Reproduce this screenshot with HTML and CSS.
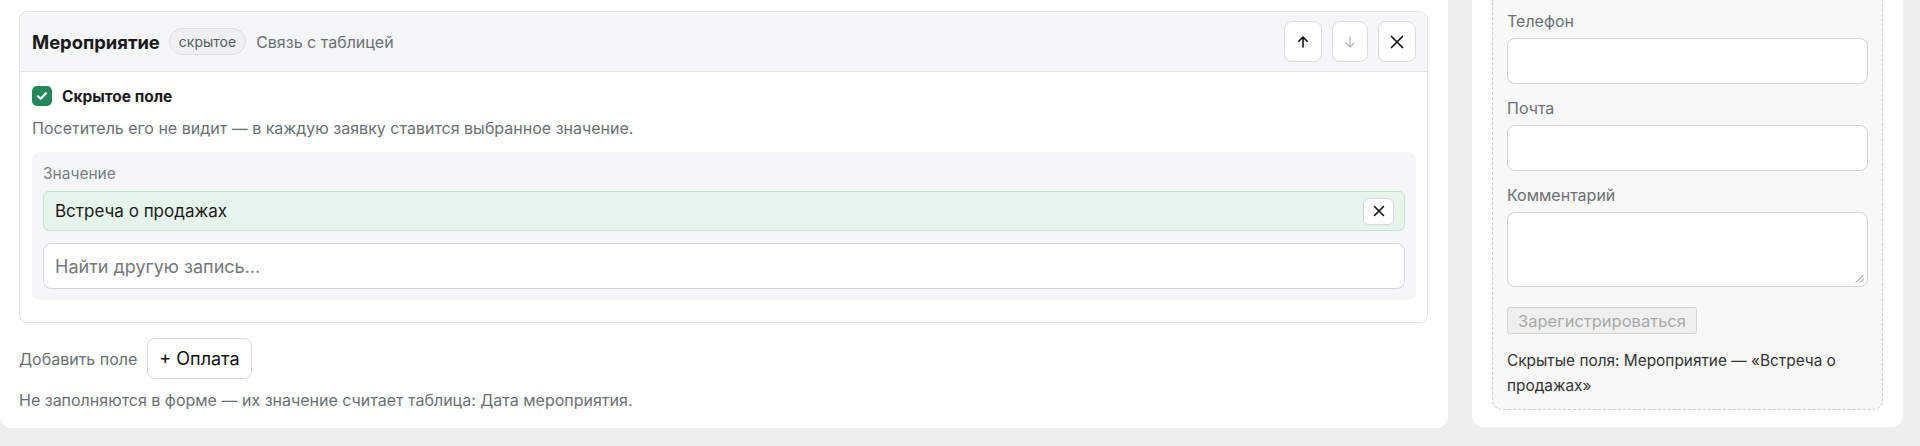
FILE: index.html
```html
<!DOCTYPE html>
<html lang="ru">
<head>
<meta charset="utf-8">
<title>Форма</title>
<link rel="stylesheet" href="styles.css">
</head>
<body>
<div class="layout">
  <main class="editor">
    <section class="field-card">
      <header class="field-head">
        <span class="field-title">Мероприятие</span>
        <span class="badge">скрытое</span>
        <span class="field-kind">Связь с таблицей</span>
        <div class="head-actions">
          <button class="icon-btn" type="button" aria-label="Вверх">
            <svg width="16" height="16" viewBox="0 0 16 16" fill="none" stroke="currentColor" stroke-width="1.6" stroke-linecap="round" stroke-linejoin="round"><path d="M8 13V3M3.8 7.2L8 3l4.2 4.2"/></svg>
          </button>
          <button class="icon-btn disabled" type="button" aria-label="Вниз">
            <svg width="16" height="16" viewBox="0 0 16 16" fill="none" stroke="currentColor" stroke-width="1.3" stroke-linecap="round" stroke-linejoin="round"><path d="M8 3v10M4 9l4 4 4-4"/></svg>
          </button>
          <button class="icon-btn" type="button" aria-label="Удалить">
            <svg width="16" height="16" viewBox="0 0 16 16" fill="none" stroke="currentColor" stroke-width="1.7" stroke-linecap="round"><path d="M2.5 2.5l11 11M13.5 2.5l-11 11"/></svg>
          </button>
        </div>
      </header>
      <div class="field-body">
        <label class="check-row">
          <span class="checkbox">
            <svg width="14" height="14" viewBox="0 0 14 14" fill="none" stroke="#fff" stroke-width="2.2" stroke-linecap="round" stroke-linejoin="round"><path d="M3 7.3l2.6 2.5L11 4.3"/></svg>
          </span>
          <span class="check-label">Скрытое поле</span>
        </label>
        <p class="hint">Посетитель его не видит — в каждую заявку ставится выбранное значение.</p>
        <div class="value-box">
          <div class="value-label">Значение</div>
          <div class="selected">
            <span>Встреча о продажах</span>
            <button class="mini-btn" type="button" aria-label="Очистить">
              <svg width="14" height="14" viewBox="0 0 14 14" fill="none" stroke="currentColor" stroke-width="1.6" stroke-linecap="round"><path d="M2.5 2.5l9 9M11.5 2.5l-9 9"/></svg>
            </button>
          </div>
          <div class="search">Найти другую запись...</div>
        </div>
      </div>
    </section>
    <div class="add-row">
      <span class="add-label">Добавить поле</span>
      <button class="add-btn" type="button">+ Оплата</button>
    </div>
    <p class="note">Не заполняются в форме — их значение считает таблица: Дата мероприятия.</p>
  </main>
  <aside class="preview">
    <div class="preview-form">
      <div class="pf-label">Телефон</div>
      <div class="pf-input"></div>
      <div class="pf-label">Почта</div>
      <div class="pf-input"></div>
      <div class="pf-label">Комментарий</div>
      <div class="pf-textarea">
        <svg class="grip" width="9" height="9" viewBox="0 0 9 9" fill="none" stroke="#888" stroke-width="1"><path d="M8.5 1L1 8.5M8.5 5L5 8.5"/></svg>
      </div>
      <button class="submit" type="button" disabled>Зарегистрироваться</button>
      <p class="pf-hidden">Скрытые поля: Мероприятие — «Встреча о продажах»</p>
    </div>
  </aside>
</div>
</body>
</html>
```

FILE: styles.css
```css
* { box-sizing: border-box; }
html, body { margin: 0; padding: 0; height: 446px; overflow: hidden; }
body {
  background: #eeefed;
  font-family: Inter, "Noto Sans", "Liberation Sans", sans-serif;
  color: #1d1d1f;
}
.layout {
  display: flex;
  gap: 24px;
  padding: 0 17px 0 0;
  align-items: flex-start;
}
.editor {
  flex: 1;
  background: #fff;
  border-radius: 0 0 12px 12px;
  padding: 11px 20px 17px 19px;
  height: 428px;
}
.field-card {
  border: 1px solid #e2e5e8;
  border-radius: 8px;
  overflow: hidden;
}
.field-head {
  display: flex;
  align-items: center;
  height: 60px;
  padding: 0 11px 0 12px;
  background: #f5f6f7;
  border-bottom: 1px solid #e2e5e8;
}
.field-title {
  font-weight: 700;
  font-size: 18.4px;
  color: #1a1a1a;
}
.badge {
  margin-left: 9px;
  height: 27px;
  padding: 0 9px;
  display: inline-flex;
  align-items: center;
  border: 1px solid #dcdfe3;
  border-radius: 14px;
  background: #eef0f2;
  font-size: 14px;
  color: #555a60;
}
.field-kind {
  margin-left: 10px;
  font-size: 16px;
  color: #6b7075;
}
.head-actions {
  margin-left: auto;
  display: flex;
  gap: 10px;
}
.icon-btn {
  width: 38px;
  height: 41px;
  display: flex;
  align-items: center;
  justify-content: center;
  background: #fff;
  border: 1px solid #d9dce0;
  border-radius: 8px;
  color: #111;
  padding: 0;
}
.icon-btn.disabled { color: #b5b8bc; width: 36px; }
.field-body {
  padding: 13px 11px 22px 12px;
}
.check-row {
  display: flex;
  align-items: center;
  gap: 10px;
  height: 22px;
}
.checkbox {
  width: 20px;
  height: 20px;
  border-radius: 5px;
  background: #23875a;
  display: flex;
  align-items: center;
  justify-content: center;
}
.check-label {
  font-weight: 700;
  font-size: 15.5px;
  color: #1a1a1a;
}
.hint {
  margin: 10px 0 13px;
  font-size: 16px;
  line-height: 22px;
  color: #6b7075;
}
.value-box {
  background: #f5f6f7;
  border-radius: 8px;
  padding: 12px 11px 11px;
}
.value-label {
  font-size: 15.5px;
  line-height: 20px;
  color: #7a7f85;
  margin-bottom: 7px;
}
.selected {
  height: 40px;
  display: flex;
  align-items: center;
  justify-content: space-between;
  padding: 0 10px 0 11px;
  background: #e7f4ec;
  border: 1px solid #bfe3cd;
  border-radius: 6px;
  font-size: 17px;
  color: #1a1a1a;
}
.mini-btn {
  width: 31px;
  height: 27px;
  display: flex;
  align-items: center;
  justify-content: center;
  background: #fff;
  border: 1px solid #d5d8dc;
  border-radius: 6px;
  color: #111;
  padding: 0;
}
.search {
  margin-top: 12px;
  height: 46px;
  display: flex;
  align-items: center;
  padding: 0 11px;
  background: #fff;
  border: 1px solid #d0d3d8;
  border-radius: 8px;
  font-size: 18px;
  color: #74787d;
}
.add-row {
  margin-top: 15px;
  display: flex;
  align-items: center;
  gap: 10px;
}
.add-label {
  font-size: 16px;
  color: #6b7075;
}
.add-btn {
  height: 41px;
  padding: 0 11px;
  background: #fff;
  border: 1px solid #d5d8dc;
  border-radius: 8px;
  font-family: inherit;
  font-size: 18px;
  color: #111;
}
.note {
  margin: 10px 0 0;
  font-size: 16px;
  line-height: 22px;
  color: #6b7075;
}
.preview {
  width: 431px;
  flex: none;
  background: #fff;
  border-radius: 0 0 12px 12px;
  padding: 0 20px 17px;
  height: 427px;
}
.preview-form {
  height: 410px;
  background: #f8f8f8;
  border: 1px dashed #c9ccd0;
  border-top: none;
  border-radius: 0 0 10px 10px;
  padding: 11px 14px 11px;
}
.pf-label {
  font-size: 16px;
  line-height: 20px;
  color: #6b7075;
  margin-bottom: 7px;
}
.pf-input {
  height: 46px;
  background: #fff;
  border: 1px solid #d0d3d8;
  border-radius: 8px;
  margin-bottom: 14px;
}
.pf-textarea {
  height: 75px;
  background: #fff;
  border: 1px solid #d0d3d8;
  border-radius: 8px;
  display: flex;
  align-items: flex-end;
  justify-content: flex-end;
  padding: 0 3px 3px 0;
}
.submit {
  margin-top: 20px;
  height: 27px;
  padding: 0 10px;
  background: #efefef;
  border: 1px solid #d3d3d3;
  border-radius: 3px;
  font-family: inherit;
  font-size: 16.5px;
  color: #a9a9a9;
}
.pf-hidden {
  margin: 14px 0 0;
  font-size: 15.4px;
  line-height: 25px;
  color: #333;
}
```
